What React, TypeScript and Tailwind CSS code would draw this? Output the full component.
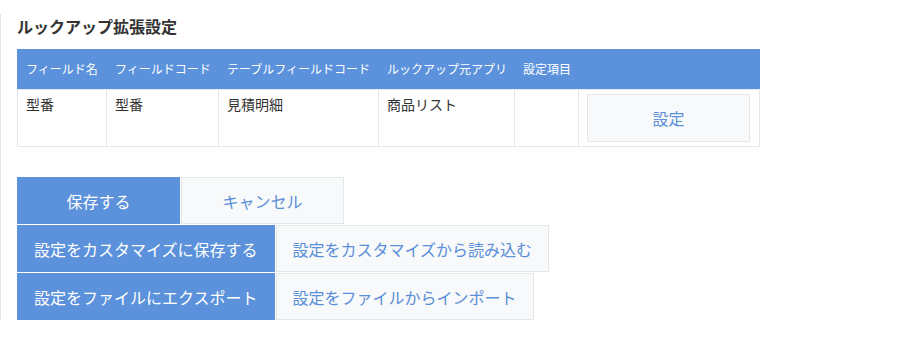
const cols = [
  { label: 'フィールド名', w: 'w-[89px]' },
  { label: 'フィールドコード', w: 'w-[112px]' },
  { label: 'テーブルフィールドコード', w: 'w-[160px]' },
  { label: 'ルックアップ元アプリ', w: 'w-[136px]' },
  { label: '設定項目', w: 'w-[64px]' },
  { label: '', w: 'w-[181px]' },
];

const row = ['型番', '型番', '見積明細', '商品リスト', ''];

function Btn({ primary, children }: { primary?: boolean; children: React.ReactNode }) {
  return (
    <button
      className={
        'h-[47px] min-w-[163px] border px-4 text-base leading-6 ' +
        (primary
          ? 'border-[#5b92db] bg-[#5b92db] text-white'
          : 'border-[#e3e7e8] bg-[#f7f9fa] text-[#5b8fd8]')
      }
    >
      {children}
    </button>
  );
}

export default function App() {
  return (
    <div className="min-h-screen bg-white pt-[14px] font-['Noto_Sans_CJK_JP',sans-serif] text-[#333]">
      <div className="border-l border-[#e3e7e8] pl-4">
        <h2 className="text-base font-bold leading-6">ルックアップ拡張設定</h2>

        <div className="mt-[11px] w-[743px]">
          <div className="flex h-10 items-center bg-[#5b92db] pl-px text-[12px] text-white">
            {cols.map((c, i) => (
              <div key={i} className={`${c.w} shrink-0 whitespace-nowrap px-2`}>
                {c.label}
              </div>
            ))}
          </div>
          <div className="flex border border-[#e3e7e8] text-sm leading-5">
            {row.map((v, i) => (
              <div
                key={i}
                className={`${cols[i].w} shrink-0 border-r border-[#e3e7e8] px-2 pt-1`}
              >
                {v}
              </div>
            ))}
            <div className="w-[180px] shrink-0 px-2 py-1">
              <button className="h-[48px] w-[163px] border border-[#e3e7e8] bg-[#f7f9fa] text-base text-[#5b8fd8]">
                設定
              </button>
            </div>
          </div>
        </div>

        <div className="mt-[30px] flex flex-col items-start gap-px">
          <div className="flex gap-px">
            <Btn primary>保存する</Btn>
            <Btn>キャンセル</Btn>
          </div>
          <div className="flex gap-px">
            <Btn primary>設定をカスタマイズに保存する</Btn>
            <Btn>設定をカスタマイズから読み込む</Btn>
          </div>
          <div className="flex gap-px">
            <Btn primary>設定をファイルにエクスポート</Btn>
            <Btn>設定をファイルからインポート</Btn>
          </div>
        </div>
      </div>
    </div>
  );
}
